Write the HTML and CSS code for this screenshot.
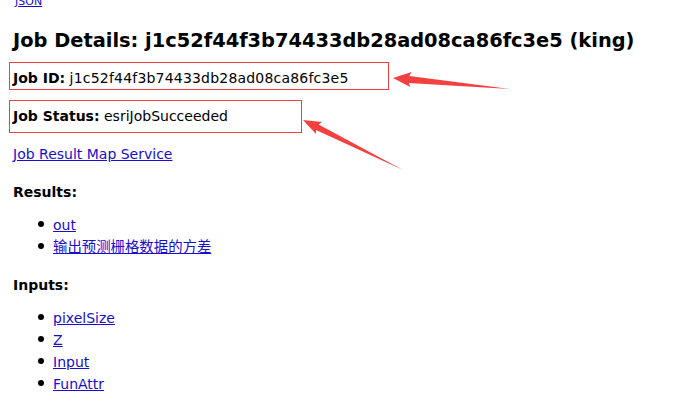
FILE: index.html
```html
<!DOCTYPE html>
<html>
<head>
<meta charset="utf-8">
<link rel="stylesheet" href="styles.css">
</head>
<body>
<div class="page">
  <a class="json" href="#">JSON</a>
  <h2 class="title">Job Details: j1c52f44f3b74433db28ad08ca86fc3e5 (king)</h2>
  <p class="field field-id"><b>Job ID:</b> <span class="job-id">j1c52f44f3b74433db28ad08ca86fc3e5</span></p>
  <p class="field field-status"><b>Job Status:</b> esriJobSucceeded</p>
  <p class="field field-link"><a href="#">Job Result Map Service</a></p>
  <p class="section section-results">Results:</p>
  <ul class="list">
    <li><a href="#">out</a></li>
    <li><a class="cjk" href="#">输出预测栅格数据的方差</a></li>
  </ul>
  <p class="section section-inputs">Inputs:</p>
  <ul class="list">
    <li><a href="#">pixelSize</a></li>
    <li><a href="#">Z</a></li>
    <li><a href="#">Input</a></li>
    <li><a href="#">FunAttr</a></li>
  </ul>
</div>
<svg class="annot" width="676" height="415" viewBox="0 0 676 415">
  <rect x="9.5" y="62.5" width="379" height="27" fill="none" stroke="#ee4040" stroke-width="1"/>
  <rect x="9.5" y="100.5" width="292" height="32" fill="none" stroke="#ee4040" stroke-width="1"/>
  <polygon fill="#f54040" points="393,78 411.6,72 409.3,76 510,89 408.7,83 410.3,87"/>
  <polygon fill="#f54040" points="303,120 322,122 318.6,124.5 403,170 316,129.9 316,134"/>
</svg>
</body>
</html>
```
FILE: styles.css
```css
html, body {
  margin: 0;
  padding: 0;
  background: #ffffff;
}
body {
  font-family: "DejaVu Sans", Verdana, "Noto Sans CJK SC", sans-serif;
  color: #000000;
  width: 676px;
  height: 415px;
  overflow: hidden;
  position: relative;
}
.page {
  padding-left: 13px;
}
a {
  color: #1a0dcc;
  text-decoration: underline;
}
.json {
  display: block;
  width: max-content;
  font-size: 11px;
  line-height: 12px;
  margin-top: -4px;
  margin-left: 2px;
}
.title {
  font-size: 19.4px;
  font-weight: bold;
  line-height: 24px;
  margin: 21px 0 0 0;
}
.field {
  font-size: 14px;
  line-height: 16px;
  margin: 0;
}
.job-id {
  letter-spacing: 0.2px;
}
.field-id {
  margin-top: 17px;
}
.field-status {
  margin-top: 22px;
}
.field-link {
  margin-top: 22px;
}
.section {
  font-size: 14px;
  font-weight: bold;
  line-height: 16px;
  margin: 0;
}
.section-results {
  margin-top: 22px;
}
.section-inputs {
  margin-top: 19px;
}
.list {
  margin: 14px 0 0 0;
  padding-left: 40px;
  font-size: 14px;
  line-height: 22px;
  list-style: none;
}
.list li::before {
  content: "";
  display: inline-block;
  width: 6px;
  height: 6px;
  border-radius: 50%;
  background: #000000;
  margin-left: -15px;
  margin-right: 9px;
  vertical-align: 3px;
}
.cjk {
  font-size: 14.4px;
}
.annot {
  position: absolute;
  left: 0;
  top: 0;
  pointer-events: none;
}
```
